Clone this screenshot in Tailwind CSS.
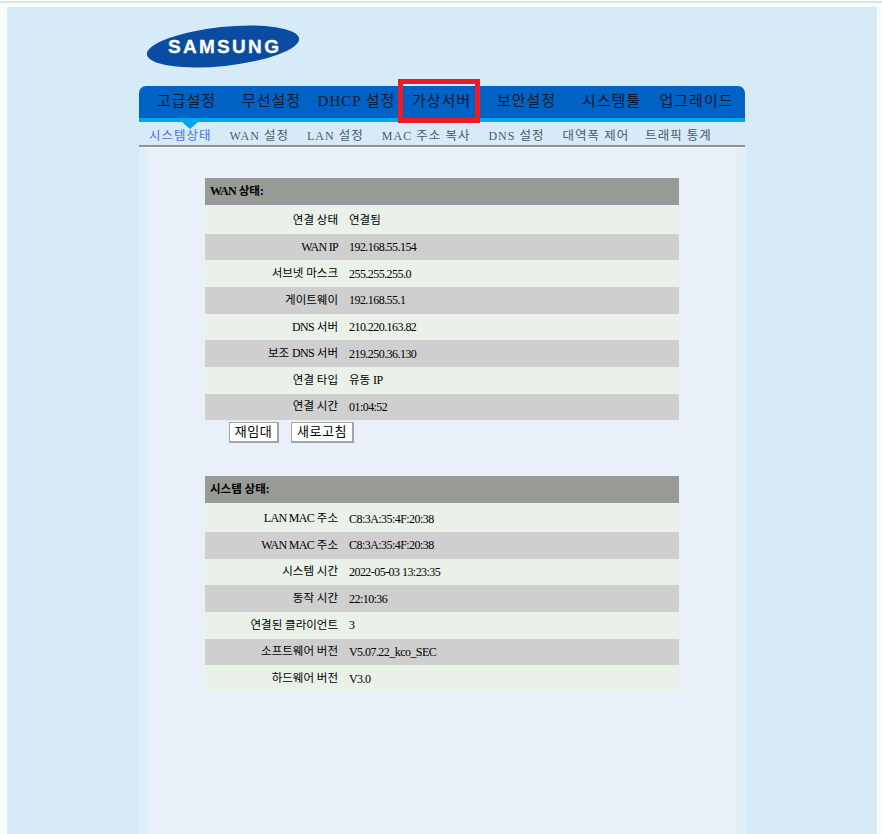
<!doctype html>
<html lang="ko"><head><meta charset="utf-8">
<script src="https://cdn.jsdelivr.net/npm/@tailwindcss/browser@4"></script>
</head>
<body class="m-0 overflow-hidden">
<div class="h-[834px] w-[882px] overflow-hidden bg-[#f8fcfa] font-['Liberation_Serif','Noto_Sans_CJK_KR',serif] text-black">
  <div class="mt-[1px] h-[2px] w-full bg-[#dbe3e3]"></div>
  <div class="mt-[4px] ml-[7px] h-[827px] w-[870px] overflow-hidden bg-[#d7eaf7] pl-[132px]">
    <div class="h-[79px] pl-[8px] pt-[18px]">
      <svg width="154" height="44" viewBox="0 0 154 44" class="block">
        <ellipse cx="76" cy="21.500" rx="76.500" ry="19.500" transform="rotate(-6 76 21.500)" fill="#0a4ca2"/>
        <text x="21" y="28" font-family="Liberation Sans" font-weight="700" font-size="19" letter-spacing="2.300" fill="#fff" stroke="#fff" stroke-width="0.300">SAMSUNG</text>
      </svg>
    </div>
    <div class="relative w-[606px]">
      <div class="grid h-[36px] grid-cols-[repeat(7,85px)] rounded-t-[7px] border-b-[4px] border-[#00a5f0] bg-[#0062c4] pl-[5px] text-[15px] leading-[30px] tracking-[1px] text-[#0c1a2c]">
        <div class="whitespace-nowrap text-center">고급설정</div>
        <div class="whitespace-nowrap text-center">무선설정</div>
        <div class="whitespace-nowrap text-center">DHCP 설정</div>
        <div class="whitespace-nowrap text-center">가상서버</div>
        <div class="whitespace-nowrap text-center">보안설정</div>
        <div class="whitespace-nowrap text-center">시스템툴</div>
        <div class="whitespace-nowrap text-center">업그레이드</div>
      </div>
      <div class="flex h-[25px] gap-[18px] border-b-2 border-[#8f9490] pl-[10px] text-[12.500px] leading-[29px] tracking-[1px] text-[#4a5a6a]">
        <span class="whitespace-nowrap text-[#4f6fe0]">시스템상태</span>
        <span class="whitespace-nowrap"><span class="text-[12px]">WAN</span> 설정</span>
        <span class="whitespace-nowrap"><span class="text-[12px]">LAN</span> 설정</span>
        <span class="whitespace-nowrap"><span class="text-[12px]">MAC</span> 주소 복사</span>
        <span class="whitespace-nowrap"><span class="text-[12px]">DNS</span> 설정</span>
        <span class="whitespace-nowrap">대역폭 제어</span>
        <span class="-ml-[2px] whitespace-nowrap">트래픽 통계</span>
      </div>
      <div class="absolute left-[43px] top-[36px] h-0 w-0 border-x-[8px] border-t-[7px] border-x-transparent border-t-[#00a5f0]"></div>
      <div class="absolute left-[259px] top-[-7px] h-[44px] w-[82px] border-[5px] border-[#ed1c24]"></div>
    </div>
    <div class="h-[700px] w-[608px] border-x-[10px] border-l-[#e0eff7] border-r-[#dfeff6] border-t border-t-white bg-[#e9f0f9] pl-[56px] pt-[30px] text-[11.500px]">
      <div class="w-[474px]">
        <div class="h-[27px] bg-[#979a95] pl-[5px] font-bold leading-[26px]"><span class="text-[12px] tracking-[-0.700px]">WAN</span> 상태:</div>
        <div class="mt-[2px] grid grid-cols-[133px_1fr] auto-rows-[26.670px] gap-x-[11px]">
          <div class="col-span-2 grid grid-cols-subgrid items-center bg-[#e9f1e8]"><div class="text-right">연결 상태</div><div>연결됨</div></div>
          <div class="col-span-2 grid grid-cols-subgrid items-center bg-[#cfcfcf]"><div class="text-right text-[12px] tracking-[-0.700px]">WAN IP</div><div class="text-[12px] tracking-[-0.550px]">192.168.55.154</div></div>
          <div class="col-span-2 grid grid-cols-subgrid items-center bg-[#e9f1e8]"><div class="text-right">서브넷 마스크</div><div class="text-[12px] tracking-[-0.550px]">255.255.255.0</div></div>
          <div class="col-span-2 grid grid-cols-subgrid items-center bg-[#cfcfcf]"><div class="text-right">게이트웨이</div><div class="text-[12px] tracking-[-0.550px]">192.168.55.1</div></div>
          <div class="col-span-2 grid grid-cols-subgrid items-center bg-[#e9f1e8]"><div class="text-right"><span class="text-[12px] tracking-[-0.700px]">DNS</span> 서버</div><div class="text-[12px] tracking-[-0.550px]">210.220.163.82</div></div>
          <div class="col-span-2 grid grid-cols-subgrid items-center bg-[#cfcfcf]"><div class="text-right">보조 <span class="text-[12px] tracking-[-0.700px]">DNS</span> 서버</div><div class="text-[12px] tracking-[-0.550px]">219.250.36.130</div></div>
          <div class="col-span-2 grid grid-cols-subgrid items-center bg-[#e9f1e8]"><div class="text-right">연결 타입</div><div>유동 <span class="text-[12px] tracking-[-0.550px]">IP</span></div></div>
          <div class="col-span-2 grid grid-cols-subgrid items-center bg-[#cfcfcf]"><div class="text-right">연결 시간</div><div class="text-[12px] tracking-[-0.550px]">01:04:52</div></div>
        </div>
        <div class="mt-[2px] flex h-[21px] gap-[12px] pl-[24px]">
          <button class="h-[21px] w-[50px] border border-b-2 border-r-2 border-[#a5a5a5] bg-white text-[13px] leading-[18px] tracking-[0.500px] text-black">재임대</button>
          <button class="h-[21px] w-[63px] border border-b-2 border-r-2 border-[#a5a5a5] bg-white text-[13px] leading-[18px] tracking-[0.500px] text-black">새로고침</button>
        </div>
        <div class="mt-[33px] h-[27px] bg-[#979a95] pl-[5px] font-bold leading-[26px]">시스템 상태:</div>
        <div class="mt-[2px] grid grid-cols-[133px_1fr] auto-rows-[26.670px] gap-x-[11px]">
          <div class="col-span-2 grid grid-cols-subgrid items-center bg-[#e9f1e8]"><div class="text-right"><span class="text-[12px] tracking-[-0.700px]">LAN MAC</span> 주소</div><div class="text-[12px] tracking-[-0.550px]">C8:3A:35:4F:20:38</div></div>
          <div class="col-span-2 grid grid-cols-subgrid items-center bg-[#cfcfcf]"><div class="text-right"><span class="text-[12px] tracking-[-0.700px]">WAN MAC</span> 주소</div><div class="text-[12px] tracking-[-0.550px]">C8:3A:35:4F:20:38</div></div>
          <div class="col-span-2 grid grid-cols-subgrid items-center bg-[#e9f1e8]"><div class="text-right">시스템 시간</div><div class="text-[12px] tracking-[-0.550px]">2022-05-03 13:23:35</div></div>
          <div class="col-span-2 grid grid-cols-subgrid items-center bg-[#cfcfcf]"><div class="text-right">동작 시간</div><div class="text-[12px] tracking-[-0.550px]">22:10:36</div></div>
          <div class="col-span-2 grid grid-cols-subgrid items-center bg-[#e9f1e8]"><div class="text-right">연결된 클라이언트</div><div class="text-[12px]">3</div></div>
          <div class="col-span-2 grid grid-cols-subgrid items-center bg-[#cfcfcf]"><div class="text-right">소프트웨어 버전</div><div class="text-[12px] tracking-[-0.550px]">V5.07.22_kco_SEC</div></div>
          <div class="col-span-2 grid grid-cols-subgrid items-center bg-[#e9f1e8]"><div class="text-right">하드웨어 버전</div><div class="text-[12px] tracking-[-0.550px]">V3.0</div></div>
        </div>
      </div>
    </div>
  </div>
</div>
</body></html>
